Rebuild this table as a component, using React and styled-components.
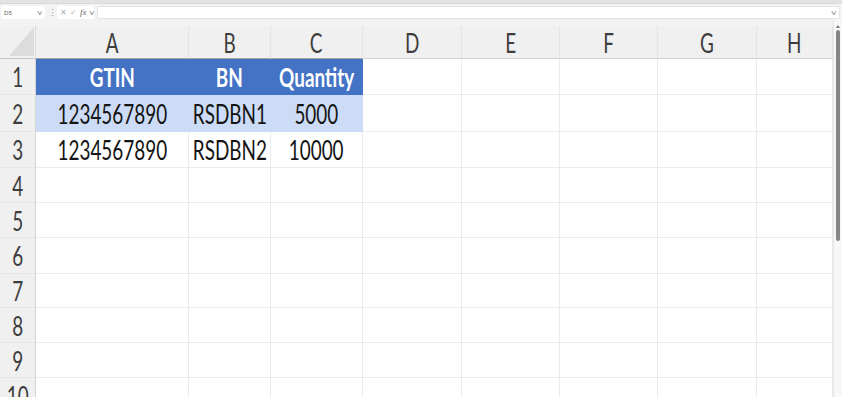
import styled, { createGlobalStyle } from "styled-components"

const GlobalStyle = createGlobalStyle`
  html, body {
    margin: 0;
    padding: 0;
    background: #ffffff;
    overflow: hidden;
  }
  * {
    box-sizing: border-box;
  }
`

const COLUMNS = [
  { key: "A", width: 153 },
  { key: "B", width: 82 },
  { key: "C", width: 92 },
  { key: "D", width: 99 },
  { key: "E", width: 98 },
  { key: "F", width: 98 },
  { key: "G", width: 99 },
  { key: "H", width: 76 },
]

const ROW_HEIGHTS = [36, 37, 36, 35, 35, 36, 34, 35, 35, 35]

const DATA = [
  ["GTIN", "BN", "Quantity"],
  ["1234567890", "RSDBN1", "5000"],
  ["1234567890", "RSDBN2", "10000"],
]

const Window = styled.div`
  width: 842px;
  height: 397px;
  display: flex;
  flex-direction: column;
  background: #ffffff;
  overflow: hidden;
  font-family: "Lato", "Open Sans", sans-serif;
`

const TopStrip = styled.div`
  height: 4px;
  flex: none;
  background: #e3e3e3;
  border-bottom: 1px solid #d9d9d9;
`

const FormulaBar = styled.div`
  height: 15px;
  flex: none;
  display: flex;
  align-items: center;
  gap: 3px;
  padding: 1px 2px 0 1px;
  background: #f3f3f3;
`

const NameBox = styled.div`
  width: 44px;
  height: 13px;
  display: flex;
  align-items: center;
  justify-content: space-between;
  padding: 0 3px;
  background: #ffffff;
  border-radius: 2px;
  font-size: 6px;
  color: #555;
`

const Chevron = styled.span`
  font-size: 7px;
  color: #888;
  transform: scaleX(1.4);
`

const Grip = styled.span`
  width: 6px;
  font-size: 9px;
  color: #999;
  text-align: center;
  line-height: 1;
`

const FxBox = styled.div`
  width: 37px;
  height: 13px;
  display: flex;
  align-items: center;
  gap: 3px;
  padding: 0 3px;
  background: #ffffff;
  border-radius: 2px;
  font-size: 8px;
  color: #b0b0b0;
`

const FxLabel = styled.span`
  font-family: "Liberation Serif", serif;
  font-style: italic;
  color: #666;
  font-size: 9px;
`

const FormulaInput = styled.div`
  flex: 1;
  height: 13px;
  display: flex;
  align-items: center;
  justify-content: flex-end;
  padding-right: 3px;
  background: #ffffff;
  border-radius: 2px;
  border: 1px solid #e4e4e4;
`

const Main = styled.div`
  flex: 1;
  display: flex;
  min-height: 0;
`

const Sheet = styled.div`
  width: 833px;
  flex: none;
  display: flex;
  flex-direction: column;
  padding-top: 7px;
  background: #f3f3f3;
`

const Row = styled.div`
  display: flex;
  flex: none;
  height: ${(p) => p.$h}px;
  background: #ffffff;
`

const HeaderRow = styled(Row)`
  background: #f0f0f0;
`

const Corner = styled.div`
  width: 36px;
  height: 100%;
  position: relative;
  border-right: 1px solid #dadada;
  border-bottom: 1px solid #c4c4c4;

  &::after {
    content: "";
    position: absolute;
    right: 1px;
    bottom: 2px;
    border-style: solid;
    border-width: 0 0 29px 25px;
    border-color: transparent transparent #dcdcdc transparent;
  }
`

const ColHead = styled.div`
  width: ${(p) => p.$w}px;
  height: 100%;
  display: flex;
  align-items: center;
  justify-content: center;
  border-right: 1px solid #e4e4e4;
  border-bottom: 1px solid ${(p) => (p.$active ? "#a3a3a3" : "#d2d2d2")};
  color: #3d3d3d;
  font-size: 27px;
`

const RowHead = styled.div`
  width: 36px;
  flex: none;
  display: flex;
  align-items: center;
  justify-content: center;
  background: #f0f0f0;
  border-right: 1px solid #d4d4d4;
  border-bottom: 1px solid #e6e6e6;
  color: #3d3d3d;
  font-size: 27px;
`

const Cell = styled.div`
  width: ${(p) => p.$w}px;
  flex: none;
  display: flex;
  align-items: center;
  justify-content: center;
  overflow: hidden;
  font-size: 27px;
  color: ${(p) => (p.$tone === "head" ? "#ffffff" : "#141414")};
  font-weight: ${(p) => (p.$tone === "head" ? 700 : 400)};
  background: ${(p) =>
    p.$tone === "head" ? "#4472c4" : p.$tone === "band" ? "#cddcf6" : "#ffffff"};
  border-right: 1px solid ${(p) => (p.$tone ? "transparent" : "#ebebeb")};
  border-bottom: 1px solid ${(p) => (p.$tone ? "transparent" : "#ebebeb")};
`

// Excel's grid font is narrow; squeeze the text horizontally
const Txt = styled.span`
  display: inline-block;
  white-space: nowrap;
  transform: scaleX(0.7);
  transform-origin: center;
  line-height: 1;
`

const ScrollTrack = styled.div`
  width: 9px;
  flex: none;
  display: flex;
  flex-direction: column;
  align-items: center;
  padding-top: 6px;
  background: #f7f7f7;
  border-left: 1px solid #e6e6e6;
`

const ScrollArrow = styled.div`
  width: 0;
  height: 0;
  border-left: 2px solid transparent;
  border-right: 2px solid transparent;
  border-bottom: 3px solid #777;
  margin-bottom: 2px;
`

const ScrollThumb = styled.div`
  width: 4px;
  height: 211px;
  border-radius: 2px;
  background: #858585;
`

function cellTone(r) {
  if (r === 0) return "head"
  if (r === 1) return "band"
  return null
}

export default function App() {
  return (
    <Window>
      <GlobalStyle />
      <TopStrip />
      <FormulaBar>
        <NameBox>
          <span>D5</span>
          <Chevron>v</Chevron>
        </NameBox>
        <Grip>⋮</Grip>
        <FxBox>
          <span>✕</span>
          <span>✓</span>
          <FxLabel>fx</FxLabel>
          <Chevron>v</Chevron>
        </FxBox>
        <FormulaInput>
          <Chevron>v</Chevron>
        </FormulaInput>
      </FormulaBar>
      <Main>
        <Sheet>
          <HeaderRow $h={33}>
            <Corner />
            {COLUMNS.map((c, i) => (
              <ColHead key={c.key} $w={c.width} $active={i < 3}>
                <Txt>{c.key}</Txt>
              </ColHead>
            ))}
          </HeaderRow>
          {ROW_HEIGHTS.map((h, r) => (
            <Row key={r} $h={h}>
              <RowHead>
                <Txt>{r + 1}</Txt>
              </RowHead>
              {COLUMNS.map((c, ci) => {
                const value = DATA[r] && DATA[r][ci]
                const tone = ci < 3 ? cellTone(r) : null
                return (
                  <Cell key={c.key} $w={c.width} $tone={tone}>
                    {value && <Txt>{value}</Txt>}
                  </Cell>
                )
              })}
            </Row>
          ))}
        </Sheet>
        <ScrollTrack>
          <ScrollArrow />
          <ScrollThumb />
        </ScrollTrack>
      </Main>
    </Window>
  )
}
